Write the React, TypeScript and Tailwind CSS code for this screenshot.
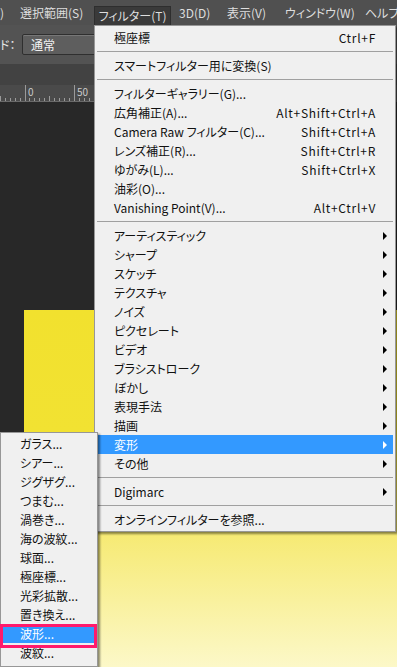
const topMenuRest = [
  { label: '3D(D)', w: 'w-[48px]' },
  { label: '表示(V)', w: 'w-[58px]' },
  { label: 'ウィンドウ(W)', w: 'w-[80px]' },
  { label: 'ヘルプ(H)', w: 'w-[60px]' },
]

type Item = { label?: string; shortcut?: string; arrow?: boolean; sep?: boolean; active?: boolean }

const filterItems: Item[] = [
  { label: '極座標', shortcut: 'Ctrl+F' },
  { sep: true },
  { label: 'スマートフィルター用に変換(S)' },
  { sep: true },
  { label: 'フィルターギャラリー(G)...' },
  { label: '広角補正(A)...', shortcut: 'Alt+Shift+Ctrl+A' },
  { label: 'Camera Raw フィルター(C)...', shortcut: 'Shift+Ctrl+A' },
  { label: 'レンズ補正(R)...', shortcut: 'Shift+Ctrl+R' },
  { label: 'ゆがみ(L)...', shortcut: 'Shift+Ctrl+X' },
  { label: '油彩(O)...' },
  { label: 'Vanishing Point(V)...', shortcut: 'Alt+Ctrl+V' },
  { sep: true },
  { label: 'アーティスティック', arrow: true },
  { label: 'シャープ', arrow: true },
  { label: 'スケッチ', arrow: true },
  { label: 'テクスチャ', arrow: true },
  { label: 'ノイズ', arrow: true },
  { label: 'ピクセレート', arrow: true },
  { label: 'ビデオ', arrow: true },
  { label: 'ブラシストローク', arrow: true },
  { label: 'ぼかし', arrow: true },
  { label: '表現手法', arrow: true },
  { label: '描画', arrow: true },
  { label: '変形', arrow: true, active: true },
  { label: 'その他', arrow: true },
  { sep: true },
  { label: 'Digimarc', arrow: true },
  { sep: true },
  { label: 'オンラインフィルターを参照...' },
]

const distortItems = [
  'ガラス...',
  'シアー...',
  'ジグザグ...',
  'つまむ...',
  '渦巻き...',
  '海の波紋...',
  '球面...',
  '極座標...',
  '光彩拡散...',
  '置き換え...',
  '波形...',
  '波紋...',
]

function Ruler() {
  const ticks = []
  for (let i = -5; i < 15; i++) {
    const x = 24.5 + i * 4.95
    const long = i % 10 === 0
    const mid = i % 5 === 0 && !long
    ticks.push(
      <line key={i} x1={Math.round(x) + 0.5} x2={Math.round(x) + 0.5} y1={long ? 0 : mid ? 11 : 13} y2={17} stroke="#9a9a9a" strokeWidth={1} />
    )
  }
  return (
    <svg width="94" height="17" className="block">
      {ticks}
      <line x1="0" x2="94" y1="16.5" y2="16.5" stroke="#6a6a6a" />
    </svg>
  )
}

export default function App() {
  return (
    <div className="relative flex h-[667px] w-[397px] flex-col overflow-hidden bg-[#282828] font-['Noto_Sans_CJK_JP',sans-serif] text-[12px] leading-none [font-feature-settings:'palt']">
      {/* menu bar */}
      <div className="flex h-[25px] shrink-0 items-stretch whitespace-nowrap bg-[#505050] text-[#dedede]">
        <div className="flex w-[20px] shrink-0 items-center">)</div>
        <div className="flex w-[74px] shrink-0 items-center">選択範囲(S)</div>
        <div className="mt-[6px] flex w-[77px] shrink-0 items-center justify-center border-x border-t border-[#2e2e2e] bg-[#3a3a3a] pb-[1px]">
          フィルター(T)
        </div>
        <div className="w-[8px] shrink-0" />
        {topMenuRest.map((m) => (
          <div key={m.label} className={`flex items-center ${m.w} shrink-0`}>
            {m.label}
          </div>
        ))}
      </div>

      {/* options bar */}
      <div className="flex h-[39px] shrink-0 items-center bg-[#535353] text-[#e6e6e6]">
        <span className="w-[22px]">ド：</span>
        <div className="flex h-[21px] w-[120px] items-center rounded-[2px] border border-[#2f2f2f] bg-[#5e5e5e] pl-[8px] text-[#f2f2f2] shadow-[inset_0_1px_0_#777]">
          通常
        </div>
      </div>

      {/* tab bar */}
      <div className="h-[21px] shrink-0 bg-[#424242]" />

      {/* ruler */}
      <div className="relative h-[17px] shrink-0 bg-[#4a4a4a] text-[10px] text-[#c9c9c9]">
        <Ruler />
        <span className="absolute left-[28px] top-[2px]">0</span>
        <span className="absolute left-[77px] top-[2px]">50</span>
      </div>

      {/* canvas */}
      <div className="flex flex-1 flex-col pl-[24px] pt-[208px]">
        <div className="flex-1 bg-[linear-gradient(to_bottom,#f2e12e_0%,#f2e232_34%,#f6ea74_63%,#fcf8c8_100%)]" />
      </div>

      {/* filter menu */}
      <div className="absolute left-[94px] top-[25px] w-[302px] border border-[#979797] bg-[#f0f0f0] p-[2px] text-[#111] shadow-[2px_2px_2px_rgba(0,0,0,0.45)]">
        {filterItems.map((it, i) =>
          it.sep ? (
            <div key={i} className="flex h-[9px] items-center">
              <div className="h-px w-full bg-[#a0a0a0]" />
            </div>
          ) : (
            <div key={i} className={`flex h-[19px] items-center pl-[17px] ${it.active ? 'bg-[#3399ff] text-white' : ''}`}>
              <span className="flex-1 whitespace-nowrap">{it.label}</span>
              {it.shortcut && <span className="whitespace-nowrap tracking-[0.7px]">{it.shortcut}</span>}
              <span className="flex w-[17px] justify-center">
                {it.arrow && (
                  <span className={`h-0 w-0 border-y-[4px] border-l-[4px] border-y-transparent ${it.active ? 'border-l-white' : 'border-l-black'}`} />
                )}
              </span>
            </div>
          )
        )}
      </div>

      {/* distort submenu */}
      <div className="absolute left-0 top-[432px] w-[98px] border border-[#979797] bg-[#f0f0f0] px-[2px] pt-[1px] pb-[4px] text-[#111] shadow-[2px_2px_2px_rgba(0,0,0,0.45)]">
        {distortItems.map((label) => (
          <div key={label} className={`flex h-[19px] items-center whitespace-nowrap pl-[17px] ${label === '波形...' ? 'bg-[#3399ff] text-white' : ''}`}>
            {label}
          </div>
        ))}
      </div>

      {/* highlight annotation */}
      <div className="absolute left-0 top-[624px] h-[24px] w-[97px] border-[3px] border-[#ff1a6c]" />
    </div>
  )
}
